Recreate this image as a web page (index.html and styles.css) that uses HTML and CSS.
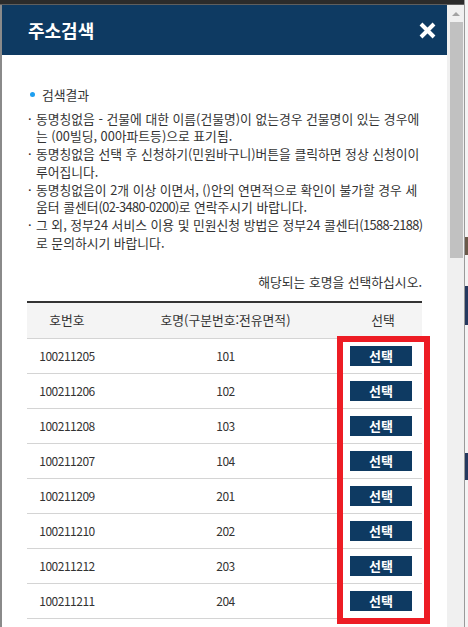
FILE: index.html
```
<!DOCTYPE html>
<html lang="ko">
<head>
<meta charset="utf-8">
<title>주소검색</title>
<link rel="stylesheet" href="styles.css">
</head>
<body>
<div class="frame">
  <div class="topbar"></div>
  <div class="main">
    <div class="window">
      <header class="win-header">
        <h1 class="win-title">주소검색</h1>
        <button class="close-btn" aria-label="닫기">
          <svg width="17" height="17" viewBox="0 0 17 17"><path d="M2 2 L15 15 M15 2 L2 15" stroke="#fff" stroke-width="4" fill="none"/></svg>
        </button>
      </header>
      <div class="win-body">
        <h2 class="result-title">검색결과</h2>
        <ul class="notes">
          <li>동명칭없음 - 건물에 대한 이름(건물명)이 없는경우 건물명이 있는 경우에는 (00빌딩, 00아파트등)으로 표기됨.</li>
          <li>동명칭없음 선택 후 신청하기(민원바구니)버튼을 클릭하면 정상 신청이이루어집니다.</li>
          <li>동명칭없음이 2개 이상 이면서, ()안의 연면적으로 확인이 불가할 경우 세움터 콜센터<span class="tel">(02-3480-0200)</span>로 연락주시기 바랍니다.</li>
          <li>그 외, 정부24 서비스 이용 및 민원신청 방법은 정부24 콜센터<span class="tel">(1588-2188)</span>로 문의하시기 바랍니다.</li>
        </ul>
        <p class="guide">해당되는 호명을 선택하십시오.</p>
        <table class="ho-table">
          <thead>
            <tr><th class="c1">호번호</th><th class="c2">호명(구분번호:전유면적)</th><th class="c3">선택</th></tr>
          </thead>
          <tbody>
            <tr><td class="num">100211205</td><td class="num">101</td><td><button class="sel-btn">선택</button></td></tr>
            <tr><td class="num">100211206</td><td class="num">102</td><td><button class="sel-btn">선택</button></td></tr>
            <tr><td class="num">100211208</td><td class="num">103</td><td><button class="sel-btn">선택</button></td></tr>
            <tr><td class="num">100211207</td><td class="num">104</td><td><button class="sel-btn">선택</button></td></tr>
            <tr><td class="num">100211209</td><td class="num">201</td><td><button class="sel-btn">선택</button></td></tr>
            <tr><td class="num">100211210</td><td class="num">202</td><td><button class="sel-btn">선택</button></td></tr>
            <tr><td class="num">100211212</td><td class="num">203</td><td><button class="sel-btn">선택</button></td></tr>
            <tr><td class="num">100211211</td><td class="num">204</td><td><button class="sel-btn">선택</button></td></tr>
          </tbody>
        </table>
      </div>
    </div>
    <div class="scrollbar">
      <div class="sb-arrow"></div>
      <div class="sb-thumb"></div>
    </div>
    <div class="behind">
      <div class="bh-a"></div>
      <div class="bh-b"></div>
      <div class="bh-c"></div>
    </div>
  </div>
  <div class="highlight"></div>
</div>
</body>
</html>
```
FILE: styles.css
```
* { box-sizing: border-box; }
html, body {
  margin: 0;
  padding: 0;
}
body {
  width: 468px;
  height: 627px;
  overflow: hidden;
  background: #f0f0f0;
  font-family: "Noto Sans CJK KR", "Liberation Sans", sans-serif;
  color: #333;
}
.frame {
  position: relative;
  width: 468px;
  height: 627px;
  display: flex;
  flex-direction: column;
}
.topbar {
  width: 464px;
  height: 5px;
  background: #2b2b2b;
  border-bottom: 1px solid #5e5e5e;
  flex: none;
}
.main {
  flex: 1;
  display: flex;
  min-height: 0;
}
.window {
  width: 447px;
  flex: none;
  border-left: 2px solid #8a8a8a;
  background: #fff;
  display: flex;
  flex-direction: column;
  overflow: hidden;
}
.win-header {
  height: 50px;
  flex: none;
  background: #0e3a62;
  display: flex;
  align-items: center;
  justify-content: space-between;
  padding: 0 11px 0 26px;
}
.win-title {
  margin: 0;
  font-size: 18px;
  font-weight: 700;
  color: #fff;
  line-height: 1;
}
.close-btn {
  border: 0;
  padding: 0;
  background: none;
  width: 17px;
  height: 17px;
  display: block;
}
.close-btn svg { display: block; }
.win-body {
  padding: 31px 25px 0 25px;
  font-size: 12.8px;
  line-height: 17.7px;
}
.result-title {
  margin: 0 0 6px 0;
  font-size: 12.8px;
  font-weight: 400;
  display: flex;
  align-items: center;
  padding-left: 3px;
}
.result-title::before {
  content: "";
  width: 5px;
  height: 5px;
  border-radius: 50%;
  background: #1e9ff0;
  margin-right: 7px;
  flex: none;
}
.notes {
  list-style: none;
  margin: 0 -4px 0 0;
  padding: 0;
}
.notes li {
  padding-left: 9px;
  text-indent: -8px;
  word-break: normal;
}
.notes li::before {
  content: "·";
  display: inline-block;
  width: 8px;
  text-indent: 0;
}
.tel {
  white-space: nowrap;
  letter-spacing: -0.6px;
}
.guide {
  margin: 22px 0 10px 0;
  text-align: right;
}
.ho-table {
  width: 395px;
  border-collapse: collapse;
  border-top: 2px solid #333;
  table-layout: fixed;
}
.ho-table th {
  height: 36px;
  background: #f4f4f4;
  font-weight: 400;
  border-bottom: 1px solid #d4d4d4;
  padding: 0;
  text-align: center;
}
.ho-table td {
  height: 35px;
  border-bottom: 1px solid #d4d4d4;
  padding: 0;
  text-align: center;
  vertical-align: middle;
}
.ho-table td.num {
  font-size: 12px;
  letter-spacing: -0.5px;
}
.c1 { width: 80px; }
.c3 { width: 78px; }
.sel-btn {
  width: 62px;
  height: 20px;
  border: 0;
  background: #0e3a62;
  color: #fff;
  font-family: inherit;
  font-size: 13px;
  font-weight: 700;
  line-height: 20px;
  padding: 0;
  display: block;
  margin: 0 0 0 6px;
}
.scrollbar {
  width: 17px;
  flex: none;
  background: #f0f0f0;
  display: flex;
  flex-direction: column;
  align-items: center;
}
.sb-arrow {
  margin-top: 7px;
  width: 0;
  height: 0;
  border-left: 4px solid transparent;
  border-right: 4px solid transparent;
  border-bottom: 4px solid #a3a3a3;
}
.sb-thumb {
  margin-top: 6px;
  width: 13px;
  height: 236px;
  background: #c1c1c1;
  margin-left: 1px;
}
.behind {
  flex: 1;
  border-left: 1px solid #9a9a9a;
  background: #f4f4f4;
  margin-top: -5px;
  display: flex;
  flex-direction: column;
}
.bh-a {
  margin-top: 237px;
  height: 18px;
  background: #6a5a4a;
}
.bh-b {
  margin-top: 31px;
  height: 39px;
  background: #25395f;
}
.bh-c {
  margin-top: 128px;
  height: 27px;
  background: #25395f;
}
.highlight {
  position: absolute;
  left: 337px;
  top: 336px;
  width: 93px;
  height: 288px;
  border: 6px solid #ed1c24;
  pointer-events: none;
}
```
